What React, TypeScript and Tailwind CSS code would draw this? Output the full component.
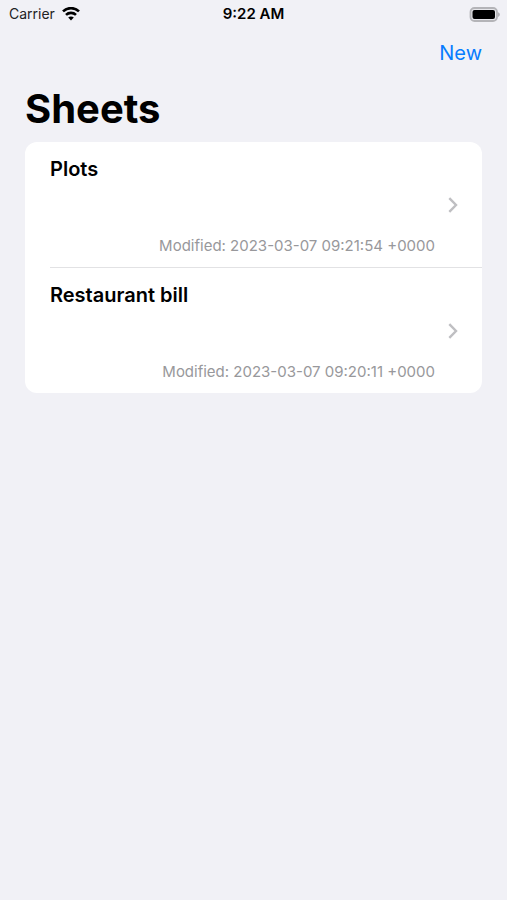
const sheets = [
  { name: 'Plots', modified: '2023-03-07 09:21:54 +0000' },
  { name: 'Restaurant bill', modified: '2023-03-07 09:20:11 +0000' },
];

function WifiIcon() {
  return (
    <svg width="18" height="14" viewBox="0 0 18 14" fill="none" stroke="#000" strokeWidth="2.6" aria-hidden="true">
      <path d="M1 4.4a11.4 11.4 0 0 1 16 0" />
      <path d="M4 7.9a7.2 7.2 0 0 1 10 0" />
      <path d="M9 13.4 6.2 10.6a3.9 3.9 0 0 1 5.6 0Z" fill="#000" stroke="none" />
    </svg>
  );
}

function BatteryIcon() {
  return (
    <svg width="31" height="15" viewBox="0 0 31 15" aria-hidden="true">
      <rect x="1.5" y="1" width="26.5" height="13" rx="4" fill="#e6e6ea" stroke="#b4b4b8" strokeWidth="1.8" />
      <rect x="3.5" y="3" width="22.5" height="9" rx="2" fill="#000" />
      <path d="M29.2 5.2c2 .8 2 3.8 0 4.6Z" fill="#a3a3a7" />
    </svg>
  );
}

function Chevron() {
  return (
    <svg width="10" height="16" viewBox="0 0 10 16" fill="none" stroke="#bfbfc2" strokeWidth="2.4" aria-hidden="true">
      <path d="M1.3 1.2 8 8l-6.7 6.8" />
    </svg>
  );
}

export default function App() {
  return (
    <div className="min-h-screen bg-[#f1f1f6] font-['Inter','Liberation_Sans',sans-serif] text-black">
      <header className="grid h-7 grid-cols-3 items-center px-[7px] text-sm">
        <div className="flex items-center gap-[7px] pl-0.5 text-[#222224]">
          <span>Carrier</span>
          <WifiIcon />
        </div>
        <span className="text-center text-[15px] font-semibold">9:22 AM</span>
        <div className="flex justify-end">
          <BatteryIcon />
        </div>
      </header>
      <nav className="flex h-[50px] items-center justify-end px-[25px]">
        <button type="button" className="text-xl text-[#087cff]">New</button>
      </nav>
      <main className="px-[25px]">
        <h1 className="pt-[7px] text-[40px] leading-12 font-bold">Sheets</h1>
        <ul className="mt-[9px] overflow-hidden rounded-xl bg-white">
          {sheets.map((sheet, i) => (
            <li key={sheet.name} className="pl-[25px]">
              <a href="#" className={`flex items-center justify-between pr-6 ${i > 0 ? 'border-t border-[#e2e2e4]' : ''}`}>
                <div className="flex h-[125px] grow flex-col justify-between pt-[13px] pb-[11px]">
                  <span className="text-xl leading-7 font-semibold">{sheet.name}</span>
                  <span className="pr-[13px] text-right text-[15px] leading-5 text-[#98989b]">Modified: {sheet.modified}</span>
                </div>
                <Chevron />
              </a>
            </li>
          ))}
        </ul>
      </main>
    </div>
  );
}
